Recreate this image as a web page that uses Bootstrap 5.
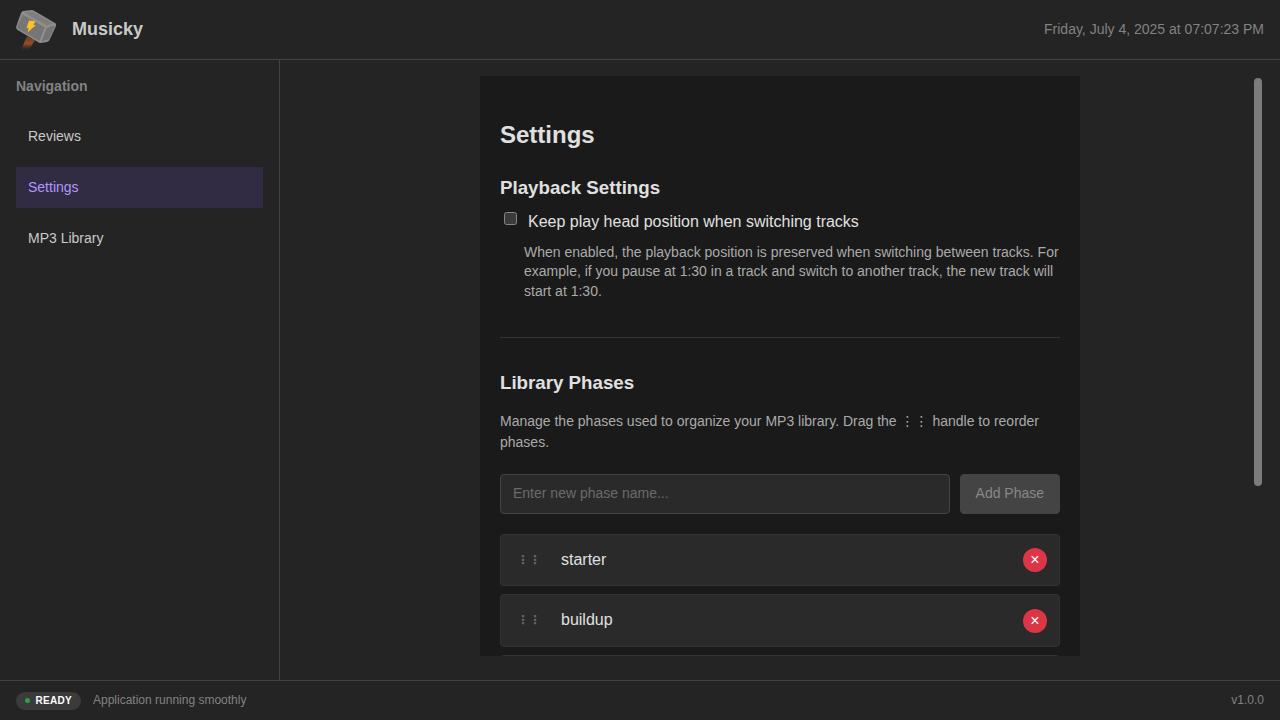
<!DOCTYPE html>
<html lang="en" data-bs-theme="dark">
<head>
<meta charset="utf-8">
<meta name="viewport" content="width=device-width, initial-scale=1">
<title>Musicky</title>
<link href="https://cdn.jsdelivr.net/npm/bootstrap@5.3.0/dist/css/bootstrap.min.css" rel="stylesheet">
<style>
  body { font-family: "Liberation Sans", "DejaVu Sans", sans-serif; font-size: 14px; line-height: 1.55; color: #c9c9c9; background: #242424; }
  .app-line { border-color: #424242 !important; }
  .app-header { height: 60px; }
  .app-footer { height: 40px; font-size: 12px; }
  .app-dim { color: #828282; }
  .app-title { font-size: 18px; line-height: 26px; padding-bottom: 2px; }
  .app-side { width: 280px; }
  .app-side .nav { gap: 10px; }
  .app-side .nav-link { padding: 10px 12px; line-height: 21px; color: #c9c9c9; border-radius: 0; }
  .app-side .nav-link.active { color: #b197fc; background: #322b44; }
  .side-label { height: 16px; line-height: 13px; padding-top: 4px; }
  .app-scroll { width: 12px; padding: 2px; }
  .app-thumb { width: 8px; height: 408px; border-radius: 8px; background: #7c7c7c; }
  .app-main { padding: 16px 16px 24px; }
  .settings { width: 600px; margin-left: 184px; padding: 40px 20px 0; background: #1a1a1a; color: #e0e0e0; }
  .settings h1, .settings h2 { color: #e0e0e0; }
  .settings h1 { font-size: 24px; line-height: 37px; margin-bottom: 20px; }
  .settings h2 { font-size: 18.72px; line-height: 29px; margin-bottom: 7px; }
  .settings .divide + h2 { margin-bottom: 14px; }
  .soft { color: #aaa; }
  .keep { font-size: 16px; line-height: 25px; }
  .keep .form-check-input { width: 13px; height: 13px; margin: 3px 11px 0 4px; border: 1px solid #858585; border-radius: 2.5px; background-color: #3b3b3b; }
  .keep-note { line-height: 1.4; margin: 8.6px 0 0 24px; }
  .divide { border-bottom: 1px solid #333; padding-top: 35.6px; margin-bottom: 30px; }
  .new-phase { gap: 10px; margin: 21px 0 19.8px; height: 40px; }
  .new-phase .form-control { font-size: 14px; line-height: 20px; padding: 8px 12px 10px; color: #e0e0e0; background: #2a2a2a; border: 1px solid #444; border-radius: 4px; }
  .new-phase .form-control::placeholder { color: #6a6a6a; }
  .new-phase .btn { width: 100px; font-size: 14px; line-height: 20px; padding: 8px .4px 10px 0; color: #888; background: #444; border: 1px solid #444; border-radius: 4px; opacity: 1; }
  .phase { padding: 12px; margin-bottom: 8px; background: #2a2a2a; border: 1px solid #333; border-radius: 4px; font-size: 16px; line-height: 24.8px; }
  .grip { font-size: 12px; line-height: 18.6px; padding: 4px; margin-right: 16px; color: #666; }
  .phase .btn { width: 24px; height: 24px; padding: 0; border: 0; font-size: 16px; line-height: 24px; color: #fff; background: #dc3545; }
  .state { width: 65px; height: 18px; gap: 5.4px; background: #3b3b3b; color: #fff; font-size: 10px; line-height: 18px; letter-spacing: .25px; }
  .state-dot { width: 5px; height: 5px; border-radius: 50%; background: #2f9e44; }
</style>
</head>
<body class="vh-100 d-flex flex-column overflow-hidden">
<header class="app-header app-line border-bottom d-flex align-items-center px-3 flex-shrink-0">
  <svg width="40" height="40" viewBox="0 0 40 40" class="me-3" aria-hidden="true">
    <defs><linearGradient id="wood" x1="0" y1="0" x2="0" y2="1"><stop offset="0" stop-color="#6b3a20"/><stop offset=".55" stop-color="#954d27"/><stop offset="1" stop-color="#5c321d" stop-opacity=".1"/></linearGradient></defs>
    <path d="M11 26 19 30 13 40H5Z" fill="url(#wood)"/>
    <path d="M7 1 15.500 0Q17 0 18.500 1L39 13Q40.500 14 40 16L34 29Q33 32 31 32L25 33Q23 33 21 31.500L1.500 20Q0 19 0 17L5 3Q6 1 7 1Z" fill="#8a8a8a"/>
    <path d="M7 4 29 17 23.500 31 2 18.500Q1 17.500 1.500 16Z" fill="#767676"/>
    <path d="M9 2.500 16 1.500 37 13.500 30 15.500Z" fill="#7e7e7e"/>
    <path d="M31 18 39 15 33 29 25.500 31.500Z" fill="#747474"/>
    <path d="M6 3 30 17 39 14M30 17 24 32" stroke="#929292" stroke-width="1.500" fill="none"/>
    <path d="M24 11.500 30 15" stroke="#a98b35" stroke-width="1"/>
    <path d="M13 10.500 19.300 11.300 17.500 15H20L11.500 22.500 12.700 18H10.500Z" fill="#ffc021"/>
  </svg>
  <div class="app-title fw-bold">Musicky</div>
  <div class="app-dim ms-auto">Friday, July 4, 2025 at 07:07:23 PM</div>
</header>
<div class="d-flex flex-grow-1 overflow-hidden">
  <aside class="app-side app-line border-end p-3 flex-shrink-0">
    <div class="side-label app-dim fw-bold mb-4">Navigation</div>
    <nav class="nav flex-column">
      <a class="nav-link" href="#">Reviews</a>
      <a class="nav-link active" href="#">Settings</a>
      <a class="nav-link" href="#">MP3 Library</a>
    </nav>
  </aside>
  <main class="app-main flex-grow-1 d-flex justify-content-between overflow-hidden">
    <section class="settings overflow-hidden">
      <h1 class="fw-bold">Settings</h1>
      <h2 class="fw-bold">Playback Settings</h2>
      <label class="keep d-flex"><input type="checkbox" class="form-check-input flex-shrink-0"><span>Keep play head position when switching tracks</span></label>
      <p class="keep-note soft">When enabled, the playback position is preserved when switching between tracks. For example, if you pause at 1:30 in a track and switch to another track, the new track will start at 1:30.</p>
      <div class="divide"></div>
      <h2 class="fw-bold">Library Phases</h2>
      <p class="soft lh-base mb-0">Manage the phases used to organize your MP3 library. Drag the ⋮⋮ handle to reorder phases.</p>
      <div class="new-phase d-flex">
        <input type="text" class="form-control" placeholder="Enter new phase name...">
        <button class="btn flex-shrink-0" disabled>Add Phase</button>
      </div>
      <div class="phase d-flex align-items-center"><span class="grip fw-bold">⋮⋮</span><span class="flex-grow-1">starter</span><button class="btn rounded-circle" aria-label="Remove starter">×</button></div>
      <div class="phase d-flex align-items-center"><span class="grip fw-bold">⋮⋮</span><span class="flex-grow-1">buildup</span><button class="btn rounded-circle" aria-label="Remove buildup">×</button></div>
      <div class="phase d-flex align-items-center pb-5"></div>
    </section>
    <div class="app-scroll"><div class="app-thumb"></div></div>
  </main>
</div>
<footer class="app-footer app-line border-top d-flex align-items-center px-3 flex-shrink-0">
  <span class="state rounded-pill d-inline-flex align-items-center justify-content-center fw-bold"><span class="state-dot"></span>READY</span>
  <span class="app-dim" style="margin-left:12px">Application running smoothly</span>
  <span class="app-dim ms-auto">v1.0.0</span>
</footer>
<script src="https://cdn.jsdelivr.net/npm/bootstrap@5.3.0/dist/js/bootstrap.bundle.min.js"></script>
</body>
</html>
